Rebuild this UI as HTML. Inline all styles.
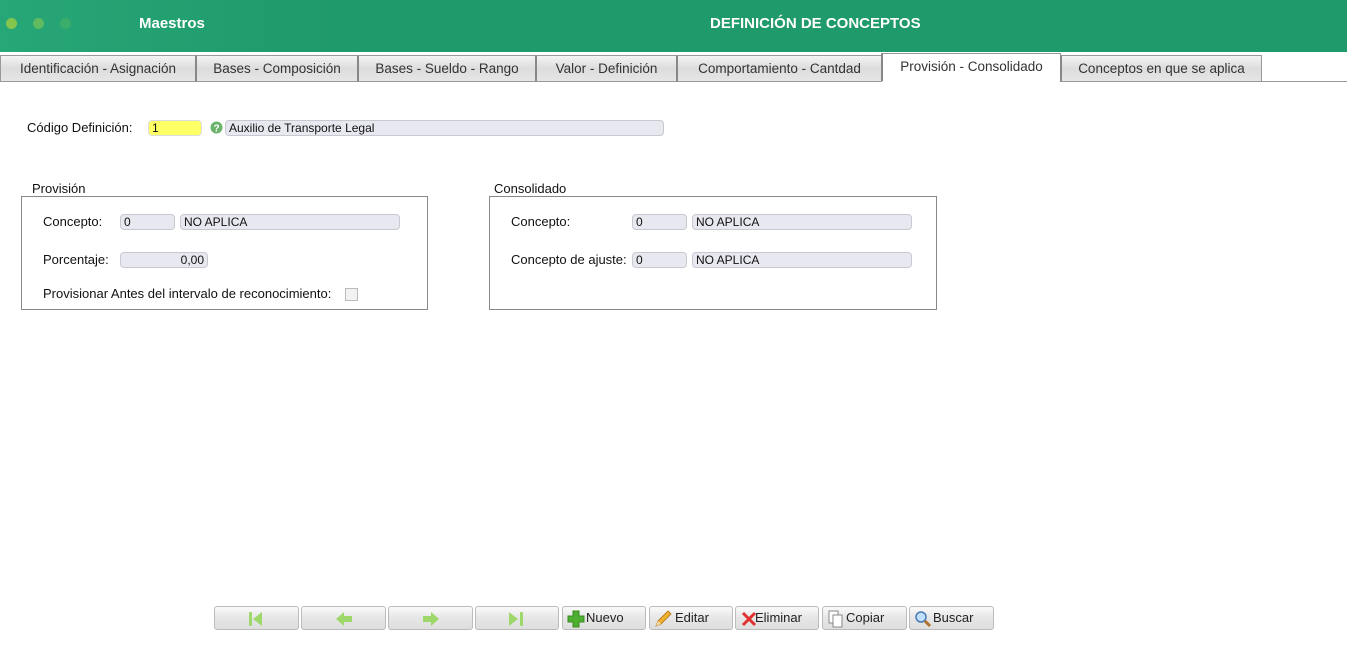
<!DOCTYPE html>
<html><head><meta charset="utf-8"><style>
*{box-sizing:border-box;margin:0;padding:0}
body{width:1347px;height:645px;background:#fff;position:relative;overflow:hidden;font-family:"Liberation Sans",sans-serif;font-size:13px;color:#222}
.hdr{position:absolute;left:0;top:0;width:1347px;height:52px;background:linear-gradient(90deg,#27a677 0%,#1f9a6a 25%,#1f9a6a 100%)}
.dot{position:absolute;top:18px;width:11px;height:11px;border-radius:50%}
.ht{position:absolute;color:#fff;font-weight:bold;font-size:15px;top:15px}
.tabs{position:absolute;left:0;top:54px;width:1347px;height:28px;border-bottom:1px solid #999}
.tab{position:absolute;top:1px;height:27px;background:linear-gradient(#f4f4f4,#dcdcdc 50%,#e6e6e6);border:1px solid #999;border-left:2px solid #888;color:#333;font-size:13.5px;text-align:center;line-height:25px}
.tab.act{background:#fff;border-bottom:1px solid #fff;top:-1px;height:29px}
.lbl{position:absolute;font-size:13px;color:#111}
.inp{position:absolute;height:16px;background:#e8e8f0;border:1px solid #c8c8d0;border-radius:4px;font-family:"Liberation Sans",sans-serif;font-size:12px;line-height:14px;padding-left:3px;color:#111}
.box{position:absolute;border:1px solid #888}
.btn{position:absolute;top:606px;height:24px;border:1px solid #bbb;border-radius:3px;background:linear-gradient(#fafafa,#e6e6e6 50%,#dedede);font-size:13px;line-height:22px;color:#222}
.btn svg{position:absolute}
</style></head><body>
<div class="hdr">
<div class="dot" style="left:6px;background:#8fc94a;opacity:.9"></div>
<div class="dot" style="left:33px;background:#6fbf5a;opacity:.8"></div>
<div class="dot" style="left:60px;background:#4ab366;opacity:.6"></div>
<div class="ht" style="left:139px">Maestros</div>
<div class="ht" style="left:710px">DEFINICIÓN DE CONCEPTOS</div>
</div>
<div class="tabs">
<div class="tab" style="left:0;width:196px;border-left:1px solid #999">Identificación - Asignación</div>
<div class="tab" style="left:195px;width:163px">Bases - Composición</div>
<div class="tab" style="left:357px;width:179px">Bases - Sueldo - Rango</div>
<div class="tab" style="left:535px;width:142px">Valor - Definición</div>
<div class="tab" style="left:676px;width:206px">Comportamiento - Cantdad</div>
<div class="tab act" style="left:881px;width:180px">Provisión - Consolidado</div>
<div class="tab" style="left:1060px;width:202px">Conceptos en que se aplica</div>
</div>

<div class="lbl" style="left:27px;top:120px">Código Definición:</div>
<div class="inp" style="left:148px;top:120px;width:54px;background:#ffff66;border-color:#ddd">1</div>
<svg style="position:absolute;left:210px;top:121px" width="13" height="13"><circle cx="6.5" cy="6.5" r="6" fill="#6bb36b"/><text x="6.5" y="10.5" font-size="10" font-weight="bold" fill="#fff" text-anchor="middle" font-family="Liberation Sans">?</text></svg>
<div class="inp" style="left:225px;top:120px;width:439px">Auxilio de Transporte Legal</div>

<div class="lbl" style="left:32px;top:181px">Provisión</div>
<div class="box" style="left:21px;top:196px;width:407px;height:114px"></div>
<div class="lbl" style="left:43px;top:214px">Concepto:</div>
<div class="inp" style="left:120px;top:214px;width:55px">0</div>
<div class="inp" style="left:180px;top:214px;width:220px">NO APLICA</div>
<div class="lbl" style="left:43px;top:252px">Porcentaje:</div>
<div class="inp" style="left:120px;top:252px;width:88px;text-align:right;padding-right:3px">0,00</div>
<div class="lbl" style="left:43px;top:286px">Provisionar Antes del intervalo de reconocimiento:</div>
<div style="position:absolute;left:345px;top:288px;width:13px;height:13px;border:1px solid #bbb;background:#f2f2f2"></div>

<div class="lbl" style="left:494px;top:181px">Consolidado</div>
<div class="box" style="left:489px;top:196px;width:448px;height:114px"></div>
<div class="lbl" style="left:511px;top:214px">Concepto:</div>
<div class="inp" style="left:632px;top:214px;width:55px">0</div>
<div class="inp" style="left:692px;top:214px;width:220px">NO APLICA</div>
<div class="lbl" style="left:511px;top:252px">Concepto de ajuste:</div>
<div class="inp" style="left:632px;top:252px;width:55px">0</div>
<div class="inp" style="left:692px;top:252px;width:220px">NO APLICA</div>

<div class="btn" style="left:214px;width:85px"><svg style="left:33px;top:4px" width="18" height="16"><rect x="1" y="1" width="3" height="14" rx="1" fill="#9fd86a"/><path d="M5 8 L14 1 V15Z" fill="#9fd86a"/></svg></div>
<div class="btn" style="left:301px;width:85px"><svg style="left:33px;top:4px" width="18" height="16"><path d="M1 8 L9 1 V5 H17 V11 H9 V15Z" fill="#9fd86a"/></svg></div>
<div class="btn" style="left:388px;width:85px"><svg style="left:33px;top:4px" width="18" height="16"><path d="M17 8 L9 1 V5 H1 V11 H9 V15Z" fill="#9fd86a"/></svg></div>
<div class="btn" style="left:475px;width:84px"><svg style="left:32px;top:4px" width="18" height="16"><path d="M1 1 L10 8 L1 15Z" fill="#9fd86a"/><rect x="12" y="1" width="3" height="14" rx="1" fill="#9fd86a"/></svg></div>
<div class="btn" style="left:562px;width:84px"><svg style="left:4px;top:3px" width="18" height="18"><path d="M6 1H12V6H17V12H12V17H6V12H1V6H6Z" fill="#4caf30" stroke="#3a8a20"/></svg><span style="position:absolute;left:23px">Nuevo</span></div>
<div class="btn" style="left:649px;width:84px"><svg style="left:4px;top:3px" width="18" height="18"><path d="M2 16 L4 11 L14 1 L17 4 L7 14Z" fill="#f0b030" stroke="#b07010" stroke-width=".8"/><path d="M2 16 L4 11 L7 14Z" fill="#f5deb0"/></svg><span style="position:absolute;left:25px">Editar</span></div>
<div class="btn" style="left:735px;width:84px"><svg style="left:5px;top:4px" width="16" height="16"><path d="M2 2L14 14M14 2L2 14" stroke="#e03030" stroke-width="3"/></svg><span style="position:absolute;left:19px">Eliminar</span></div>
<div class="btn" style="left:822px;width:85px"><svg style="left:5px;top:3px" width="16" height="18"><rect x="1" y="1" width="9" height="12" fill="#fff" stroke="#888"/><rect x="5" y="5" width="9" height="12" fill="#fff" stroke="#888"/></svg><span style="position:absolute;left:23px">Copiar</span></div>
<div class="btn" style="left:909px;width:85px"><svg style="left:4px;top:3px" width="18" height="18"><circle cx="7" cy="7" r="5" fill="#bfe0ff" stroke="#4a7ab0" stroke-width="1.5"/><path d="M11 11L16 16" stroke="#b07030" stroke-width="3"/></svg><span style="position:absolute;left:23px">Buscar</span></div>
</body></html>
